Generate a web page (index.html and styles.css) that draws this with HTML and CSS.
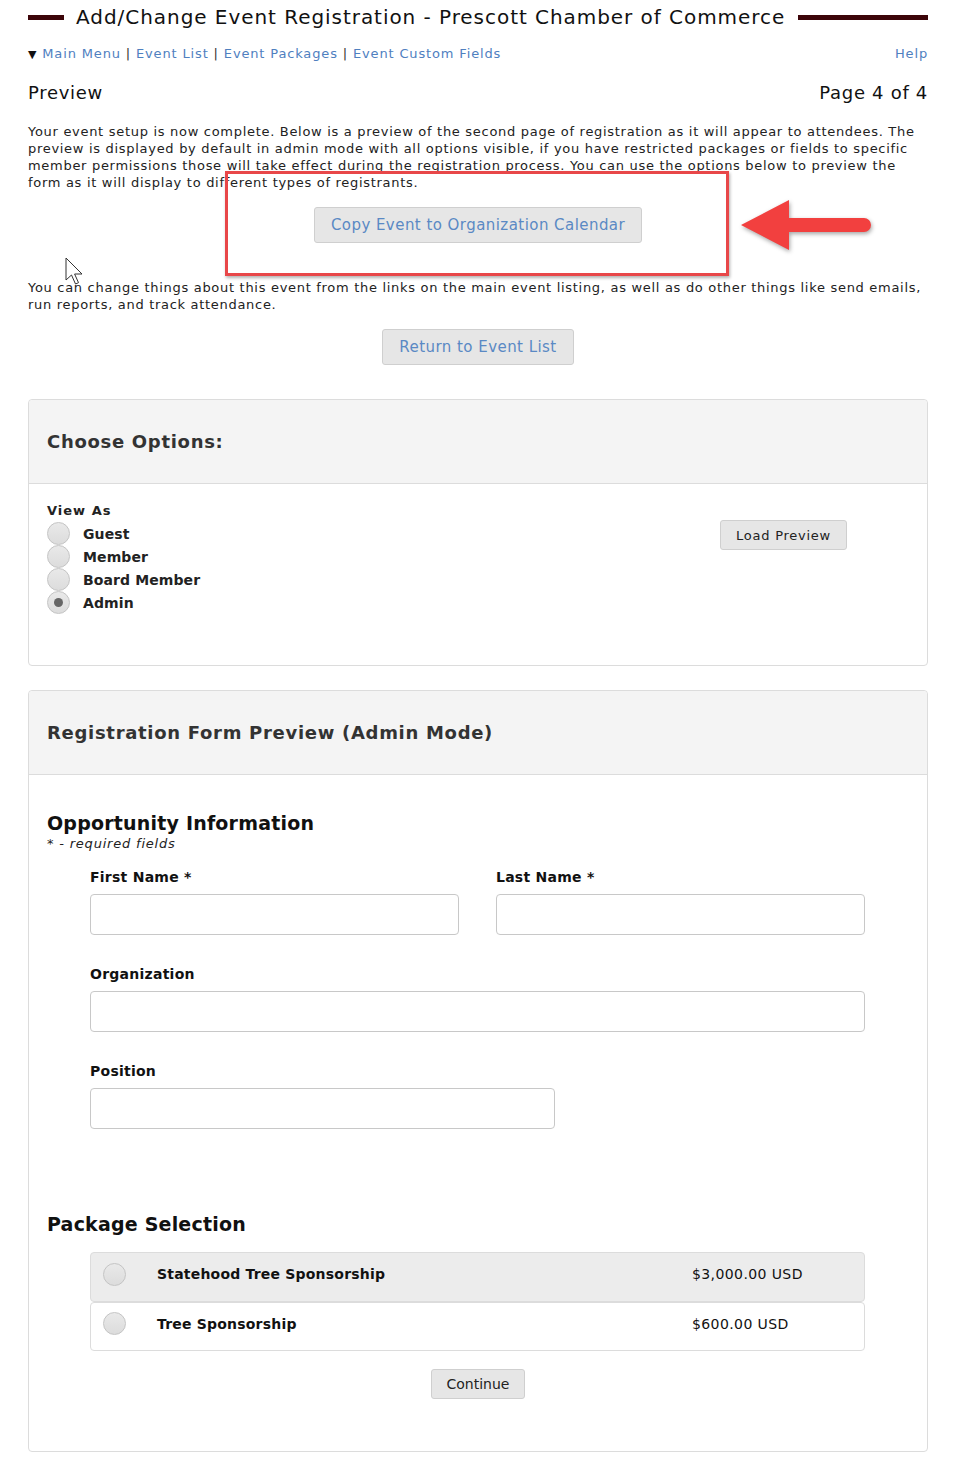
FILE: index.html
```html
<!DOCTYPE html>
<html lang="en">
<head>
    <meta charset="UTF-8">
    <meta name="viewport" content="width=device-width, initial-scale=1.0">
    <title>Add/Change Event Registration</title>
    <link rel="stylesheet" href="styles.css">
</head>
<body>
<div class="page">
    <h1 class="title-bar">
        <span class="bar bar-left"></span>
        <span class="title-text">Add/Change Event Registration - Prescott Chamber of Commerce</span>
        <span class="bar bar-right"></span>
    </h1>

    <div class="nav">
        <div class="nav-links">
            <span class="caret">&#9660;</span>
            <a href="#">Main Menu</a> <span class="sep">|</span>
            <a href="#">Event List</a> <span class="sep">|</span>
            <a href="#">Event Packages</a> <span class="sep">|</span>
            <a href="#">Event Custom Fields</a>
        </div>
        <a href="#">Help</a>
    </div>

    <div class="step-row">
        <span>Preview</span>
        <span>Page 4 of 4</span>
    </div>

    <p class="intro">Your event setup is now complete. Below is a preview of the second page of registration as it will appear to attendees. The preview is displayed by default in admin mode with all options visible, if you have restricted packages or fields to specific member permissions those will take effect during the registration process. You can use the options below to preview the form as it will display to different types of registrants.</p>

    <div class="center copy-row">
        <button class="btn btn-link">Copy Event to Organization Calendar</button>
    </div>

    <p class="intro second">You can change things about this event from the links on the main event listing, as well as do other things like send emails, run reports, and track attendance.</p>

    <div class="center return-row">
        <button class="btn btn-link btn-return">Return to Event List</button>
    </div>

    <div class="panel options-panel">
        <div class="panel-head">
            <h2>Choose Options:</h2>
        </div>
        <div class="panel-body options-body">
            <div class="view-as">
                <div class="view-label">View As</div>
                <label class="radio-row"><input type="radio" name="viewas"> Guest</label>
                <label class="radio-row"><input type="radio" name="viewas"> Member</label>
                <label class="radio-row"><input type="radio" name="viewas"> Board Member</label>
                <label class="radio-row"><input type="radio" name="viewas" checked> Admin</label>
            </div>
            <div class="load-col">
                <button class="btn btn-plain">Load Preview</button>
            </div>
        </div>
    </div>

    <div class="panel form-panel">
        <div class="panel-head">
            <h2>Registration Form Preview (Admin Mode)</h2>
        </div>
        <div class="panel-body form-body">
            <h3>Opportunity Information</h3>
            <div class="required-note">* - required fields</div>

            <div class="fields">
                <div class="field-row two">
                    <div class="field">
                        <label>First Name *</label>
                        <input type="text">
                    </div>
                    <div class="field">
                        <label>Last Name *</label>
                        <input type="text">
                    </div>
                </div>
                <div class="field">
                    <label>Organization</label>
                    <input type="text">
                </div>
                <div class="field short">
                    <label>Position</label>
                    <input type="text">
                </div>
            </div>

            <h3 class="package-title">Package Selection</h3>
            <div class="packages">
                <label class="package shaded">
                    <input type="radio" name="pkg">
                    <span class="pkg-name">Statehood Tree Sponsorship</span>
                    <span class="pkg-price">$3,000.00 USD</span>
                </label>
                <label class="package">
                    <input type="radio" name="pkg">
                    <span class="pkg-name">Tree Sponsorship</span>
                    <span class="pkg-price">$600.00 USD</span>
                </label>
            </div>

            <div class="center continue-row">
                <button class="btn btn-plain btn-continue">Continue</button>
            </div>
        </div>
    </div>

    <!-- screenshot annotations -->
    <div class="callout-box"></div>
    <svg class="callout-arrow" width="140" height="60" viewBox="0 0 140 60">
        <path d="M4 30 L52 5 L52 23 L127 23 A7 7 0 0 1 127 37 L52 37 L52 55 Z" fill="#f2403f"/>
    </svg>
    <svg class="cursor" width="22" height="30" viewBox="0 0 22 30">
        <path d="M1 1 L1 23 L6.5 18 L10.5 27 L13.5 25.7 L9.6 17 L17 17 Z" fill="#fff" stroke="#333" stroke-width="1" stroke-linejoin="round"/>
    </svg>
</div>
</body>
</html>
```

FILE: styles.css
```css
body {
    margin: 0;
    font-family: "DejaVu Sans", Verdana, sans-serif;
    font-size: 13px;
    letter-spacing: 0.7px;
    color: #222;
    background: #fff;
}
.page {
    position: relative;
    padding: 0 27px 14px 28px;
}
a {
    color: #4f80bf;
    text-decoration: none;
}
.title-bar {
    display: flex;
    align-items: center;
    margin: 0;
    height: 34px;
    font-size: 20px;
    letter-spacing: 0.95px;
    font-weight: normal;
    color: #111;
}
.bar {
    height: 5px;
    background: #3c0509;
}
.bar-left {
    width: 36px;
    margin-right: 12px;
}
.bar-right {
    flex: 1;
    margin-left: 13px;
}
.title-text {
    white-space: nowrap;
}
.nav {
    display: flex;
    justify-content: space-between;
    margin-top: 11px;
    line-height: 17px;
    letter-spacing: 0.85px;
}
.caret {
    font-size: 11px;
    color: #111;
}
.sep {
    color: #333;
}
.step-row {
    display: flex;
    justify-content: space-between;
    margin-top: 18px;
    font-size: 18px;
    letter-spacing: 0.7px;
    line-height: 24px;
    color: #111;
}
.intro {
    margin: 18px 0 0;
    line-height: 17px;
}
.intro.second {
    margin-top: 36px;
}
.center {
    text-align: center;
}
.copy-row {
    margin-top: 16px;
}
.return-row {
    margin-top: 16px;
}
.btn {
    font-family: "DejaVu Sans", Verdana, sans-serif;
    background: #e6e6e6;
    border: 1px solid #cfcfcf;
    border-radius: 3px;
    cursor: pointer;
}
.btn-link {
    color: #5a89c4;
    font-size: 15px;
    letter-spacing: 0.45px;
    height: 36px;
    padding: 0 16px;
}
.btn-plain {
    color: #222;
    font-size: 13px;
    letter-spacing: 0.75px;
    height: 30px;
    padding: 0 15px;
}
.panel {
    border: 1px solid #dcdcdc;
    border-radius: 4px;
    margin-top: 34px;
}
.form-panel {
    margin-top: 24px;
}
.panel-head {
    height: 83px;
    display: flex;
    align-items: center;
    padding: 0 18px;
    background: #f4f4f4;
    border-bottom: 1px solid #dcdcdc;
    border-radius: 4px 4px 0 0;
}
.panel-head h2 {
    margin: 0;
    font-size: 18px;
    letter-spacing: 0.7px;
    color: #333;
}
.panel-body {
    padding: 15px 18px 51px;
}
.options-body {
    display: flex;
    justify-content: space-between;
    align-items: flex-start;
}
.view-label {
    font-weight: bold;
    letter-spacing: 1px;
    line-height: 23px;
}
.radio-row {
    display: flex;
    align-items: center;
    height: 23px;
    font-weight: bold;
    font-size: 14px;
    letter-spacing: 0.1px;
}
input[type="radio"] {
    appearance: none;
    -webkit-appearance: none;
    width: 23px;
    height: 23px;
    margin: 0 13px 0 0;
    border: 1px solid #c4c4c4;
    border-radius: 50%;
    background: linear-gradient(#e9e9e9, #dcdcdc);
    flex-shrink: 0;
    position: relative;
}
input[type="radio"]:checked::after {
    content: "";
    position: absolute;
    left: 6px;
    top: 6px;
    width: 9px;
    height: 9px;
    border-radius: 50%;
    background: #666;
}
.load-col {
    padding: 21px 62px 0 0;
}
.form-body {
    padding: 36px 18px 52px;
}
.form-body h3 {
    margin: 0;
    font-size: 19px;
    letter-spacing: 0.2px;
    line-height: 24px;
    color: #111;
}
.required-note {
    font-style: italic;
    letter-spacing: 0.8px;
    line-height: 17px;
}
.fields {
    padding: 0 44px 0 43px;
}
.field-row.two {
    display: grid;
    grid-template-columns: 1fr 1fr;
    gap: 37px;
}
.field {
    margin-top: 31px;
}
.field-row .field {
    margin-top: 17px;
}
.field label {
    display: block;
    font-weight: bold;
    font-size: 14px;
    letter-spacing: 0.25px;
    line-height: 17px;
    margin-bottom: 8px;
    color: #111;
}
.field input {
    display: block;
    box-sizing: border-box;
    width: 100%;
    height: 41px;
    border: 1px solid #c8c8c8;
    border-radius: 4px;
    background: #fff;
}
.field.short input {
    width: 60%;
}
.form-body .package-title {
    margin-top: 83px;
}
.packages {
    margin: 16px 44px 0 43px;
}
.package {
    display: flex;
    align-items: center;
    box-sizing: border-box;
    height: 49px;
    padding: 0 12px 6px;
    border: 1px solid #dcdcdc;
    border-radius: 4px;
    font-size: 14px;
    letter-spacing: 0.2px;
    color: #111;
}
.package.shaded {
    background: #ececec;
    height: 50px;
}
.package input[type="radio"] {
    margin-right: 31px;
}
.pkg-name {
    font-weight: bold;
    width: 535px;
}
.pkg-price {
    letter-spacing: 0.4px;
}
.continue-row {
    margin-top: 18px;
}
.btn-continue {
    font-size: 14px;
    letter-spacing: 0;
}
.callout-box {
    position: absolute;
    left: 225px;
    top: 171px;
    width: 498px;
    height: 99px;
    border: 3px solid #e84749;
    box-shadow: 1px 2px 3px rgba(0, 0, 0, 0.3);
}
.callout-arrow {
    position: absolute;
    left: 737px;
    top: 195px;
    filter: drop-shadow(1px 2px 2px rgba(0, 0, 0, 0.35));
}
.cursor {
    position: absolute;
    left: 65px;
    top: 257px;
}
```
